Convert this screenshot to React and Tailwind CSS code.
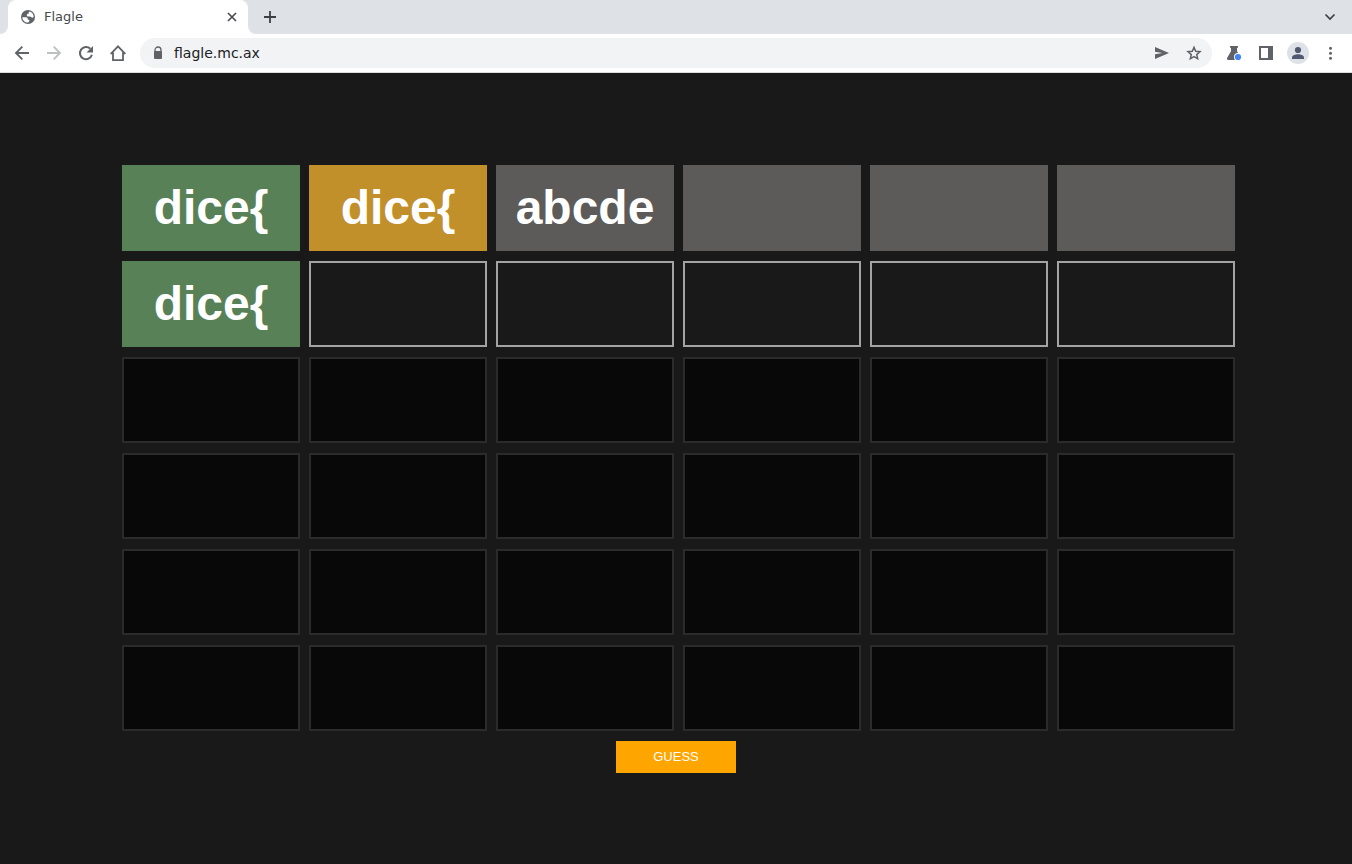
import React from "react";

const rows = [
  [
    { text: "dice{", state: "correct" },
    { text: "dice{", state: "present" },
    { text: "abcde", state: "absent" },
    { text: "", state: "absent" },
    { text: "", state: "absent" },
    { text: "", state: "absent" },
  ],
  [
    { text: "dice{", state: "correct" },
    ...Array.from({ length: 5 }, () => ({ text: "", state: "active" })),
  ],
  ...Array.from({ length: 4 }, () =>
    Array.from({ length: 6 }, () => ({ text: "", state: "locked" }))
  ),
];

const cellStyles = {
  correct: "border-[#588157] bg-[#588157]",
  present: "border-[#c1902a] bg-[#c1902a]",
  absent: "border-[#5c5b59] bg-[#5c5b59]",
  active: "border-[#a3a3a3] bg-[#191919]",
  locked: "border-[#2b2b2b] bg-[#080808]",
};

function Glyph({ children, size = "size-4" }) {
  return (
    <svg viewBox="0 0 16 16" className={`${size} shrink-0`} fill="currentColor" aria-hidden="true">
      {children}
    </svg>
  );
}

function GlobeIcon() {
  return (
    <svg viewBox="0 0 16 16" className="size-4 text-[#5f6368]" aria-hidden="true">
      <circle cx="8" cy="8" r="7" fill="currentColor" />
      <path
        d="M2.300 8.300h3.200c1.600 0 2.300.6 2.300 1.700v.8h1.500v1.200c0 .6-.5 1.200-1.100 1.600-3.100.2-5.800-2-5.900-5.300zM9.600 2.600c2.300.6 4 2.600 4.100 5.200-.5.7-1.100 1-1.800.8-.8-.2-1.100-1-1.900-1H8.300c-.9 0-1.500-.6-1.500-1.400 0-.8.6-1.400 1.400-1.400h.5V4c0-.8.3-1.100.9-1.400z"
        fill="#fff"
      />
    </svg>
  );
}

function IconButton({ label, className = "", children }) {
  return (
    <button
      type="button"
      aria-label={label}
      className={`flex size-8 shrink-0 items-center justify-center text-[#5f6368] ${className}`}
    >
      {children}
    </button>
  );
}

function TabStrip() {
  return (
    <div className="flex h-[34px] items-stretch bg-[#dee1e6]">
      <div className="flex w-2 bg-white">
        <span className="flex-1 rounded-br-lg bg-[#dee1e6]" />
      </div>
      <div className="flex w-60 items-center rounded-t-lg bg-white pr-2 pl-3">
        <GlobeIcon />
        <span className="ml-2 flex-1 text-[13px] leading-4 text-[#45494d]">Flagle</span>
        <button
          type="button"
          aria-label="Close tab"
          className="flex size-4 items-center justify-center text-[#45494d]"
        >
          <Glyph>
            <path d="M4 4l8 8M12 4l-8 8" stroke="currentColor" strokeWidth="1.600" />
          </Glyph>
        </button>
      </div>
      <div className="flex w-2 bg-white">
        <span className="flex-1 rounded-bl-lg bg-[#dee1e6]" />
      </div>
      <button
        type="button"
        aria-label="New tab"
        className="flex w-7 items-center justify-center text-[#3c4043]"
      >
        <Glyph>
          <path d="M8 2v12M2 8h12" stroke="currentColor" strokeWidth="1.800" />
        </Glyph>
      </button>
      <button
        type="button"
        aria-label="Search tabs"
        className="mr-2 ml-auto flex w-7 items-center justify-center text-[#3c4043]"
      >
        <Glyph>
          <path d="M3.500 5.500L8 10l4.500-4.500" fill="none" stroke="currentColor" strokeWidth="1.700" />
        </Glyph>
      </button>
    </div>
  );
}

function Toolbar() {
  return (
    <div className="flex h-[39px] items-center border-b border-[#dadce0] bg-white pr-[6px] pl-[6px]">
      <IconButton label="Back">
        <Glyph>
          <path d="M15 8H2.500M8.300 1.700L2 8l6.300 6.300" fill="none" stroke="currentColor" strokeWidth="1.900" />
        </Glyph>
      </IconButton>
      <IconButton label="Forward" className="opacity-40">
        <Glyph>
          <path d="M1 8h12.500M7.700 1.700L14 8l-6.300 6.300" fill="none" stroke="currentColor" strokeWidth="1.900" />
        </Glyph>
      </IconButton>
      <IconButton label="Reload">
        <Glyph>
          <path d="M13.900 9.800A6.100 6.100 0 1 1 12.300 3.700" fill="none" stroke="currentColor" strokeWidth="2" />
          <path d="M15 1v6.500H8.500z" />
        </Glyph>
      </IconButton>
      <IconButton label="Home">
        <svg viewBox="0 0 18 18" className="size-[18px]" fill="none" stroke="currentColor" strokeWidth="1.800">
          <path d="M1.800 9.900L9 2.300l7.200 7.600M1.500 9.400H4v6.700h10V9.400h2.500" />
        </svg>
      </IconButton>
      <form
        onSubmit={(e) => e.preventDefault()}
        className="mx-[6px] flex h-[30px] min-w-0 flex-1 items-center rounded-full bg-[#f1f3f4] pr-[2px] pl-[10px]"
      >
        <span className="text-[#5f6368]">
          <Glyph>
            <path d="M5 7V5a3 3 0 0 1 6 0v2" fill="none" stroke="currentColor" strokeWidth="1.300" />
            <rect x="4" y="6" width="8" height="8" rx="1" />
          </Glyph>
        </span>
        <input
          type="text"
          aria-label="Address"
          defaultValue="flagle.mc.ax"
          className="ml-2 min-w-0 flex-1 bg-transparent text-sm text-[#202124] outline-none"
        />
        <IconButton label="Share">
          <Glyph>
            <path d="M1 2l14 6L1 14V9.300L8.500 8 1 6.700z" />
          </Glyph>
        </IconButton>
        <IconButton label="Bookmark">
          <Glyph>
            <path
              d="M8 2.300l1.700 4 4.300.4-3.300 2.900 1 4.200L8 11.600l-3.700 2.200 1-4.200L2 6.700l4.300-.4z"
              fill="none"
              stroke="currentColor"
              strokeWidth="1.500"
            />
          </Glyph>
        </IconButton>
      </form>
      <IconButton label="Experiments">
        <Glyph>
          <path d="M4 1h8v1.800h-1v3.400l3.800 6.500c.7 1.300 0 2.300-1.300 2.300h-11C1.200 15 .5 14 1.200 12.700L5 6.200V2.800H4z" />
          <circle cx="12" cy="12" r="4" fill="#fff" />
          <circle cx="12" cy="12" r="3.100" fill="#4285f4" />
        </Glyph>
      </IconButton>
      <IconButton label="Side panel">
        <Glyph>
          <path fillRule="evenodd" d="M1 1h14v14H1zM3 3v10h7V3z" />
        </Glyph>
      </IconButton>
      <IconButton label="Profile">
        <span className="flex size-[22px] items-center justify-center rounded-full bg-[#dee1e6] text-[#50596f]">
          <Glyph>
            <circle cx="8" cy="5" r="3.100" />
            <path d="M2 14v-1.500C2 10.500 5.500 9.300 8 9.300s6 1.200 6 3.200V14z" />
          </Glyph>
        </span>
      </IconButton>
      <IconButton label="Menu">
        <Glyph>
          <circle cx="8.500" cy="3.200" r="1.500" />
          <circle cx="8.500" cy="8.200" r="1.500" />
          <circle cx="8.500" cy="13.200" r="1.500" />
        </Glyph>
      </IconButton>
    </div>
  );
}

export default function App() {
  return (
    <div className="flex min-h-screen flex-col bg-[#191919] font-['DejaVu_Sans',sans-serif]">
      <header>
        <TabStrip />
        <Toolbar />
      </header>
      <main className="flex flex-1 flex-col items-center justify-center gap-[10px] font-['Liberation_Sans',sans-serif]">
        <div className="grid w-full max-w-[1118px] grid-cols-6 gap-x-[9px] gap-y-[10px] pl-[5px]">
          {rows.map((row, r) =>
            row.map((cell, c) => (
              <input
                key={`${r}-${c}`}
                type="text"
                maxLength={5}
                aria-label={`Guess ${r + 1}, part ${c + 1}`}
                defaultValue={cell.text}
                readOnly={r === 0}
                disabled={cell.state === "locked"}
                className={`h-[86px] w-full min-w-0 border-2 text-center text-5xl font-bold text-white outline-none ${cellStyles[cell.state]}`}
              />
            ))
          )}
        </div>
        <button type="button" className="h-8 w-[120px] bg-[#ffa500] text-[13px] text-white">
          GUESS
        </button>
      </main>
    </div>
  );
}
